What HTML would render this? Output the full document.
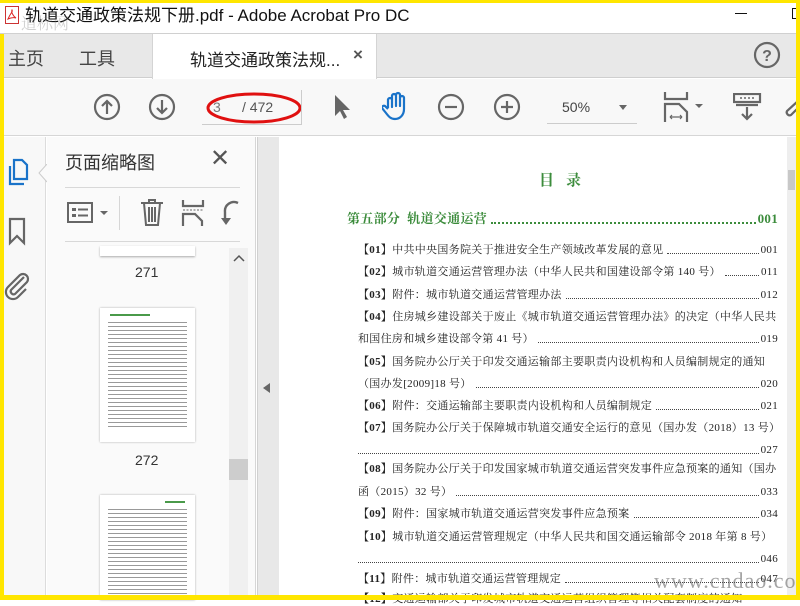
<!DOCTYPE html>
<html><head><meta charset="utf-8"><style>
*{margin:0;padding:0;box-sizing:border-box}
body{width:800px;height:600px;overflow:hidden;position:relative;background:#fff;font-family:"Liberation Sans","Noto Sans CJK SC",sans-serif;color:#333}
.a{position:absolute}
.y{background:#ffe600;position:absolute}
.toc{position:absolute;left:358px;width:420px;display:flex;align-items:flex-end;font-family:"Liberation Serif","Noto Serif CJK SC",serif;font-size:11px;color:#222;height:14px;line-height:14px;white-space:nowrap;letter-spacing:0.3px}
.toc .d{flex:1;border-bottom:1px dotted #444;margin:0 2px 3px 4px;height:1px}
.toc b{font-weight:bold}
svg{position:absolute}
</style></head><body>
<!-- title bar -->
<div class="a" style="left:0;top:0;width:800px;height:34px;background:#fff;border-bottom:1px solid #d0d0d0"></div>
<svg style="left:5px;top:6px" width="14" height="18" viewBox="0 0 14 18"><rect x="0.5" y="0.5" width="13" height="17" fill="#fff" stroke="#c33"/><path d="M3 13 C6 6 8 6 7 4 C6 6 8 10 11 12 C8 11 5 12 3 13Z" fill="none" stroke="#d22" stroke-width="1"/></svg>
<div class="a" style="left:25px;top:5px;font-size:17px;color:#111;line-height:22px">轨道交通政策法规下册.pdf - Adobe Acrobat Pro DC</div>
<div class="a" style="left:21px;top:11px;font-size:16px;color:rgba(120,120,120,0.35);font-family:'Liberation Serif','Noto Serif CJK SC',serif">道标网</div>
<div class="a" style="left:735px;top:13px;width:12px;height:1px;background:#111"></div>
<div class="a" style="left:792px;top:8px;width:5px;height:11px;border:1px solid #111;border-right:none"></div>
<!-- tab bar -->
<div class="a" style="left:0;top:34px;width:800px;height:44px;background:#e8e8e8;border-bottom:1px solid #cfcfcf"></div>
<div class="a" style="left:152px;top:34px;width:225px;height:45px;background:#fff;border-left:1px solid #d4d4d4;border-right:1px solid #d4d4d4"></div>
<div class="a" style="left:8px;top:45px;font-size:18px;color:#444">主页</div>
<div class="a" style="left:79px;top:45px;font-size:18px;color:#444">工具</div>
<div class="a" style="left:190px;top:46px;font-size:17px;color:#222">轨道交通政策法规...</div>
<div class="a" style="left:353px;top:45px;font-size:17px;font-weight:bold;color:#555">×</div>
<svg style="left:753px;top:41px" width="30" height="30"><circle cx="14" cy="14" r="12" fill="none" stroke="#666" stroke-width="2.2"/><text x="14" y="20" text-anchor="middle" font-size="16" font-weight="bold" fill="#666" font-family="Liberation Sans">?</text></svg>
<!-- toolbar -->
<div class="a" style="left:0;top:79px;width:800px;height:57px;background:#f8f8f8;border-bottom:1px solid #d6d6d6"></div>
<svg style="left:93px;top:92px" width="30" height="30"><circle cx="14" cy="15" r="12" fill="none" stroke="#666" stroke-width="2.2"/><path d="M14 22V9M9 14l5-5 5 5" fill="none" stroke="#666" stroke-width="2.2"/></svg>
<svg style="left:148px;top:92px" width="30" height="30"><circle cx="14" cy="15" r="12" fill="none" stroke="#666" stroke-width="2.2"/><path d="M14 8v13M9 16l5 5 5-5" fill="none" stroke="#666" stroke-width="2.2"/></svg>
<div class="a" style="left:202px;top:124px;width:100px;height:1px;background:#ccc"></div>
<div class="a" style="left:213px;top:99px;font-size:14px;color:#777">3</div>
<div class="a" style="left:242px;top:99px;font-size:14px;color:#555">/ 472</div>
<svg style="left:205px;top:90px" width="100" height="36"><ellipse cx="49" cy="18" rx="46" ry="14" fill="none" stroke="#e01010" stroke-width="3"/></svg>
<div class="a" style="left:301px;top:90px;width:1px;height:34px;background:#ccc"></div>
<svg style="left:331px;top:92px" width="24" height="30"><path d="M4 3L4 24 9 19 13 27 16 25 12 18 19 18Z" fill="#666"/></svg>
<svg style="left:382px;top:91px" width="30" height="32"><path d="M6 17V9a2 2 0 014 0v7V5a2 2 0 014 0v10V4a2 2 0 014 0v11V7a2 2 0 014 0v11c0 6-4 10-9 10-4 0-6-2-9-6l-4-5a2 2 0 013-2l3 3" fill="none" stroke="#1a73c9" stroke-width="2.2" stroke-linejoin="round"/></svg>
<svg style="left:437px;top:92px" width="30" height="30"><circle cx="14" cy="15" r="12" fill="none" stroke="#666" stroke-width="2.2"/><path d="M8 15h12" stroke="#666" stroke-width="2.2"/></svg>
<svg style="left:493px;top:92px" width="30" height="30"><circle cx="14" cy="15" r="12" fill="none" stroke="#666" stroke-width="2.2"/><path d="M8 15h12M14 9v12" stroke="#666" stroke-width="2.2"/></svg>
<div class="a" style="left:562px;top:99px;font-size:14px;color:#444">50%</div>
<div class="a" style="left:619px;top:105px;border:4px solid transparent;border-top:5px solid #666"></div>
<div class="a" style="left:547px;top:123px;width:90px;height:1px;background:#ccc"></div>
<svg style="left:663px;top:90px" width="40" height="34"><path d="M2 2v7h22V2" fill="none" stroke="#666" stroke-width="2.2"/><path d="M2 32V14h14l8 8v10" fill="none" stroke="#666" stroke-width="2.2"/><path d="M7 27h12M7 27l2-2M7 27l2 2M19 27l-2-2M19 27l-2 2" stroke="#666" stroke-width="1.2"/><path d="M32 14l4 4 4-4z" fill="#666"/></svg>
<svg style="left:733px;top:93px" width="30" height="30"><rect x="1" y="1" width="26" height="8" fill="none" stroke="#666" stroke-width="2.2"/><path d="M7 5h2M11 5h2M15 5h2M19 5h2" stroke="#666" stroke-width="1.6"/><path d="M3 12h22M14 14v12M9 21l5 5 5-5" fill="none" stroke="#666" stroke-width="2.2"/></svg>
<svg style="left:782px;top:97px" width="18" height="22"><path d="M16 4L5 14a3 3 0 004 4l8-8" fill="none" stroke="#666" stroke-width="2.2"/></svg>
<!-- left icon column -->
<div class="a" style="left:0;top:137px;width:46px;height:463px;background:#f8f8f8;border-right:1px solid #dcdcdc"></div>
<svg style="left:6px;top:158px" width="28" height="30"><path d="M8 2h8l5 5v14H8z" fill="none" stroke="#1a73c9" stroke-width="2.2"/><path d="M4 8v18h14" fill="none" stroke="#1a73c9" stroke-width="2.2"/></svg>
<svg style="left:38px;top:164px" width="10" height="20"><path d="M9 0L1 9 9 18" fill="#fafafa" stroke="#ccc"/></svg>
<svg style="left:7px;top:216px" width="22" height="30"><path d="M3 3h14v24l-7-7-7 7z" fill="none" stroke="#666" stroke-width="2.2"/></svg>
<svg style="left:4px;top:272px" width="28" height="30"><path d="M20 5L7 18a3 3 0 004 4L23 10a5 5 0 00-7-7L4 15a7 7 0 0010 10l8-8" fill="none" stroke="#666" stroke-width="2.2"/></svg>
<!-- thumbnails panel -->
<div class="a" style="left:47px;top:137px;width:209px;height:463px;background:#fafafa;border-right:1px solid #d6d6d6"></div>
<div class="a" style="left:65px;top:149px;font-size:18px;color:#333">页面缩略图</div>
<div class="a" style="left:210px;top:144px;font-size:24px;color:#555;line-height:30px">✕</div>
<div class="a" style="left:65px;top:187px;width:175px;height:1px;background:#d8d8d8"></div>
<div class="a" style="left:65px;top:241px;width:175px;height:1px;background:#d8d8d8"></div>
<svg style="left:66px;top:200px" width="50" height="28"><rect x="2" y="3" width="24" height="19" fill="none" stroke="#666" stroke-width="2"/><rect x="6" y="8" width="4" height="3" fill="#666"/><rect x="6" y="14" width="4" height="3" fill="#666"/><path d="M12 9.5h10M12 15.5h10" stroke="#666" stroke-width="2"/><path d="M34 11l4 4 4-4z" fill="#666"/></svg>
<div class="a" style="left:119px;top:196px;width:1px;height:34px;background:#d6d6d6"></div>
<svg style="left:139px;top:197px" width="28" height="32"><path d="M2 6h22M10 6V3h6v3M5 6l2 22h12l2-22M10 10v15M13 10v15M16 10v15" fill="none" stroke="#666" stroke-width="2"/></svg>
<svg style="left:181px;top:198px" width="26" height="30"><path d="M2 2v6h20V2M2 28V16h12l7 7v5" fill="none" stroke="#666" stroke-width="2.2"/><path d="M2 12h20" stroke="#666" stroke-dasharray="2 1.5"/></svg>
<svg style="left:220px;top:200px" width="22" height="30"><path d="M18 3a9 9 0 00-13 9v8" fill="none" stroke="#666" stroke-width="2.4"/><path d="M1 18l5 7 5-7z" fill="#666"/></svg>
<!-- thumbs -->
<div class="a" style="left:100px;top:246px;width:95px;height:10px;background:#fff;box-shadow:0 1px 2px #aaa"></div>
<div class="a" style="left:135px;top:264px;font-size:14px;color:#333">271</div>
<div class="a" style="left:100px;top:308px;width:95px;height:134px;background:#fff;box-shadow:0 0 2px #aaa;overflow:hidden">
<div style="margin:6px 10px 0;height:2px;width:40px;background:#4a9a4a"></div>
<div style="margin:4px 8px;height:108px;background:repeating-linear-gradient(#fff 0 2px,#999 2px 3px,#fff 3px 4px)"></div></div>
<div class="a" style="left:135px;top:452px;font-size:14px;color:#333">272</div>
<div class="a" style="left:100px;top:495px;width:95px;height:105px;background:#fff;box-shadow:0 0 2px #aaa;overflow:hidden">
<div style="margin:6px 0 0 65px;height:2px;width:20px;background:#4a9a4a"></div>
<div style="margin:4px 8px;height:100px;background:repeating-linear-gradient(#fff 0 2px,#999 2px 3px,#fff 3px 4px)"></div></div>
<div class="a" style="left:229px;top:248px;width:19px;height:352px;background:#f0f0f0"></div>
<svg style="left:232px;top:254px" width="14" height="10"><path d="M2 7l5-5 5 5" fill="none" stroke="#555" stroke-width="1.5"/></svg>
<div class="a" style="left:229px;top:459px;width:19px;height:21px;background:#cdcdcd"></div>
<!-- doc area -->
<div class="a" style="left:257px;top:137px;width:22px;height:463px;background:#e8e8e8;border-left:1px solid #d0d0d0"></div>
<div class="a" style="left:263px;top:383px;border:5px solid transparent;border-right:7px solid #666;border-left:none"></div>
<div class="a" style="left:279px;top:137px;width:508px;height:463px;background:#fff"></div>
<div class="a" style="left:787px;top:137px;width:9px;height:463px;background:#eee"></div>
<div class="a" style="left:788px;top:170px;width:7px;height:20px;background:#c8c8c8"></div>
<div class="a" style="left:539px;top:169px;font-size:15px;font-weight:bold;color:#3c8c3c;font-family:'Liberation Serif','Noto Serif CJK SC',serif;letter-spacing:12px">目录</div>
<div class="toc" style="top:211px;height:16px;line-height:16px;left:347px;width:431px;font-size:13px;color:#3c8c3c;font-weight:bold;letter-spacing:0.3px"><span>第五部分&nbsp; 轨道交通运营</span><span class="d" style="border-color:#3c8c3c;border-bottom-width:2px"></span><span>001</span></div>
<div class="toc" style="top:243px"><span><b>【01】</b>中共中央国务院关于推进安全生产领域改革发展的意见</span><span class="d"></span><span>001</span></div>
<div class="toc" style="top:265px"><span><b>【02】</b>城市轨道交通运营管理办法（中华人民共和国建设部令第 140 号）</span><span class="d"></span><span>011</span></div>
<div class="toc" style="top:288px"><span><b>【03】</b>附件：城市轨道交通运营管理办法</span><span class="d"></span><span>012</span></div>
<div class="toc" style="top:310px"><span><b>【04】</b>住房城乡建设部关于废止《城市轨道交通运营管理办法》的决定（中华人民共</span></div>
<div class="toc" style="top:332px"><span>和国住房和城乡建设部令第 41 号）</span><span class="d"></span><span>019</span></div>
<div class="toc" style="top:355px"><span><b>【05】</b>国务院办公厅关于印发交通运输部主要职责内设机构和人员编制规定的通知</span></div>
<div class="toc" style="top:377px"><span>（国办发[2009]18 号）</span><span class="d"></span><span>020</span></div>
<div class="toc" style="top:399px"><span><b>【06】</b>附件：交通运输部主要职责内设机构和人员编制规定</span><span class="d"></span><span>021</span></div>
<div class="toc" style="top:421px"><span><b>【07】</b>国务院办公厅关于保障城市轨道交通安全运行的意见（国办发（2018）13 号）</span></div>
<div class="toc" style="top:443px"><span></span><span class="d" style="margin-left:0"></span><span>027</span></div>
<div class="toc" style="top:462px"><span><b>【08】</b>国务院办公厅关于印发国家城市轨道交通运营突发事件应急预案的通知（国办</span></div>
<div class="toc" style="top:485px"><span>函（2015）32 号）</span><span class="d"></span><span>033</span></div>
<div class="toc" style="top:507px"><span><b>【09】</b>附件：国家城市轨道交通运营突发事件应急预案</span><span class="d"></span><span>034</span></div>
<div class="toc" style="top:530px"><span><b>【10】</b>城市轨道交通运营管理规定（中华人民共和国交通运输部令 2018 年第 8 号）</span></div>
<div class="toc" style="top:552px"><span></span><span class="d" style="margin-left:0"></span><span>046</span></div>
<div class="toc" style="top:572px"><span><b>【11】</b>附件：城市轨道交通运营管理规定</span><span class="d"></span><span>047</span></div>
<div class="toc" style="top:592px"><span><b>【12】</b>交通运输部关于印发城市轨道交通运营组织管理等相关配套制度的通知</span></div>
<div class="a" style="left:654px;top:568px;font-size:22px;color:rgba(90,90,90,0.55);font-family:'Liberation Serif',serif;letter-spacing:1px">www.cndao.com</div>
<!-- yellow frame -->
<div class="y" style="left:0;top:0;width:800px;height:3px"></div>
<div class="y" style="left:0;top:34px;width:4px;height:566px"></div>
<div class="y" style="left:796px;top:0;width:4px;height:600px"></div>
<div class="y" style="left:0;top:595px;width:800px;height:5px"></div>
</body></html>
